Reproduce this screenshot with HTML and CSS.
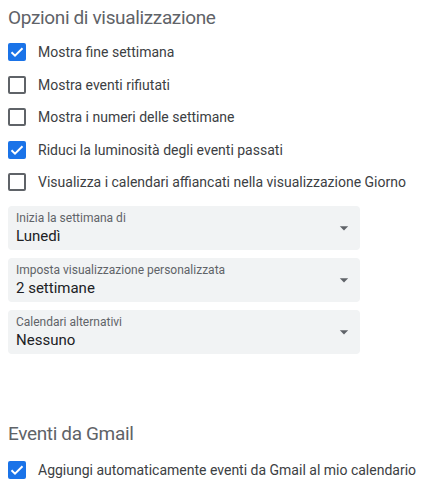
FILE: index.html
```html
<!DOCTYPE html>
<html>
<head>
<meta charset="UTF-8">
<title>Opzioni di visualizzazione</title>
<link rel="stylesheet" href="styles.css">
</head>
<body>
	<div id="page">
		<h2 class="titolo">Opzioni di visualizzazione</h2>

		<div class="riga">
			<span class="casella attiva"><svg viewBox="0 0 18 18"><polyline points="3.5,9.2 7,12.6 14.5,5.2"/></svg></span>
			<span class="etichetta">Mostra fine settimana</span>
		</div>
		<div class="riga">
			<span class="casella"></span>
			<span class="etichetta">Mostra eventi rifiutati</span>
		</div>
		<div class="riga">
			<span class="casella"></span>
			<span class="etichetta">Mostra i numeri delle settimane</span>
		</div>
		<div class="riga">
			<span class="casella attiva"><svg viewBox="0 0 18 18"><polyline points="3.5,9.2 7,12.6 14.5,5.2"/></svg></span>
			<span class="etichetta">Riduci la luminosità degli eventi passati</span>
		</div>
		<div class="riga">
			<span class="casella"></span>
			<span class="etichetta">Visualizza i calendari affiancati nella visualizzazione Giorno</span>
		</div>

		<div class="selezioni">
			<div class="selezione">
				<div class="testi">
					<span class="nome">Inizia la settimana di</span>
					<span class="valore">Lunedì</span>
				</div>
				<svg class="freccia" viewBox="0 0 24 24"><path d="M7 10l5 5 5-5z"/></svg>
			</div>
			<div class="selezione">
				<div class="testi">
					<span class="nome">Imposta visualizzazione personalizzata</span>
					<span class="valore">2 settimane</span>
				</div>
				<svg class="freccia" viewBox="0 0 24 24"><path d="M7 10l5 5 5-5z"/></svg>
			</div>
			<div class="selezione">
				<div class="testi">
					<span class="nome">Calendari alternativi</span>
					<span class="valore">Nessuno</span>
				</div>
				<svg class="freccia" viewBox="0 0 24 24"><path d="M7 10l5 5 5-5z"/></svg>
			</div>
		</div>

		<h2 class="titolo secondo">Eventi da Gmail</h2>

		<div class="riga">
			<span class="casella attiva"><svg viewBox="0 0 18 18"><polyline points="3.5,9.2 7,12.6 14.5,5.2"/></svg></span>
			<span class="etichetta">Aggiungi automaticamente eventi da Gmail al mio calendario</span>
		</div>
	</div>
</body>
</html>
```

FILE: styles.css
```css
body
{
	margin : 0;
	background : #fff;
	font-family : Roboto, "Liberation Sans", Arial, sans-serif;
	color : #3c4043;
}

#page
{
	padding : 0 8px;
}

.titolo
{
	margin : 0;
	padding-top : 6px;
	font-size : 19px;
	font-weight : 400;
	letter-spacing : -0.35px;
	line-height : 24px;
	color : #5f6368;
	margin-bottom : 6px;
}

.titolo.secondo
{
	padding-top : 0;
	margin-top : 68px;
	margin-bottom : 8px;
}

.riga
{
	display : flex;
	align-items : center;
	height : 32.5px;
}

.casella
{
	box-sizing : border-box;
	width : 18px;
	height : 18px;
	border : 2px solid #5f6368;
	border-radius : 2px;
	flex-shrink : 0;
	margin-right : 12px;
}

.casella.attiva
{
	border : none;
	background : #1a73e8;
}

.casella svg
{
	display : block;
	width : 18px;
	height : 18px;
}

.casella polyline
{
	fill : none;
	stroke : #fff;
	stroke-width : 2;
}

.etichetta
{
	font-size : 14px;
	line-height : 20px;
	color : #3c4043;
}

.selezioni
{
	display : flex;
	flex-direction : column;
	gap : 8px;
	margin-top : 7px;
	width : 352px;
}

.selezione
{
	display : flex;
	align-items : center;
	height : 44px;
	box-sizing : border-box;
	padding : 0 6px 0 8px;
	background : #f1f3f4;
	border-radius : 4px;
}

.testi
{
	flex : 1;
	display : flex;
	flex-direction : column;
	padding-top : 1px;
}

.nome
{
	font-size : 12px;
	line-height : 16px;
	color : #5f6368;
}

.valore
{
	font-size : 15px;
	line-height : 20px;
	color : #202124;
}

.freccia
{
	width : 20px;
	height : 20px;
	fill : #5f6368;
}
```
